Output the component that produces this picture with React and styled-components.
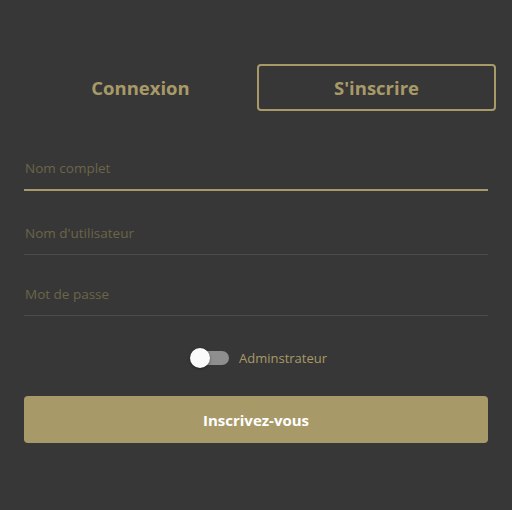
import { useState } from "react";
import styled, { createGlobalStyle } from "styled-components";

const GlobalStyle = createGlobalStyle`
  html, body {
    margin: 0;
    padding: 0;
    background: #373737;
    font-family: "Open Sans", "Noto Sans", sans-serif;
  }
`;

const Page = styled.div`
  width: 512px;
  height: 510px;
  box-sizing: border-box;
  padding: 64px 16px 0 24px;
  background: #373737;
`;

const Tabs = styled.div`
  display: grid;
  grid-template-columns: 233px 239px;
  margin-bottom: 44px;
`;

const Tab = styled.button`
  height: 47px;
  background: transparent;
  border: 2px solid ${({ active }) => (active ? "#a89a68" : "transparent")};
  border-radius: 4px;
  color: #a89a68;
  font-family: inherit;
  font-size: 18.5px;
  font-weight: 700;
  cursor: pointer;
`;

const Form = styled.div`
  width: 464px;
  display: flex;
  flex-direction: column;
`;

const Field = styled.input`
  box-sizing: border-box;
  height: 36px;
  padding: 0 1px 8px;
  margin-top: ${({ gap }) => gap}px;
  background: transparent;
  border: none;
  border-bottom: ${({ focused }) =>
    focused ? "2px solid #a89a68" : "1px solid #4c4c4c"};
  color: #d8d0b0;
  font-family: inherit;
  font-size: 13.5px;
  outline: none;

  &::placeholder {
    color: #6d6548;
  }
`;

const ToggleRow = styled.label`
  display: flex;
  justify-content: center;
  align-items: center;
  gap: 10px;
  height: 20px;
  margin: 32px 0 28px;
  color: #a89a68;
  font-size: 13px;
  cursor: pointer;
`;

const Track = styled.span`
  position: relative;
  width: 38px;
  height: 14px;
  border-radius: 7px;
  background: #8e8e8e;
  margin-left: 6px;
`;

const Knob = styled.span`
  position: absolute;
  top: -3px;
  left: ${({ on }) => (on ? "18px" : "-1px")};
  width: 20px;
  height: 20px;
  border-radius: 50%;
  background: #fafafa;
  box-shadow: 0 1px 3px rgba(0, 0, 0, 0.4);
`;

const Submit = styled.button`
  height: 47px;
  border: none;
  border-radius: 4px;
  background: #a89a68;
  color: #ffffff;
  font-family: inherit;
  font-size: 15px;
  font-weight: 700;
  cursor: pointer;
`;

export default function App() {
  const [admin, setAdmin] = useState(false);

  return (
    <Page>
      <GlobalStyle />
      <Tabs>
        <Tab>Connexion</Tab>
        <Tab active>S'inscrire</Tab>
      </Tabs>
      <Form>
        <Field placeholder="Nom complet" focused gap={0} />
        <Field placeholder="Nom d'utilisateur" gap={28} />
        <Field placeholder="Mot de passe" type="password" gap={25} />
        <ToggleRow onClick={() => setAdmin(!admin)}>
          <Track>
            <Knob on={admin} />
          </Track>
          Adminstrateur
        </ToggleRow>
        <Submit>Inscrivez-vous</Submit>
      </Form>
    </Page>
  );
}
